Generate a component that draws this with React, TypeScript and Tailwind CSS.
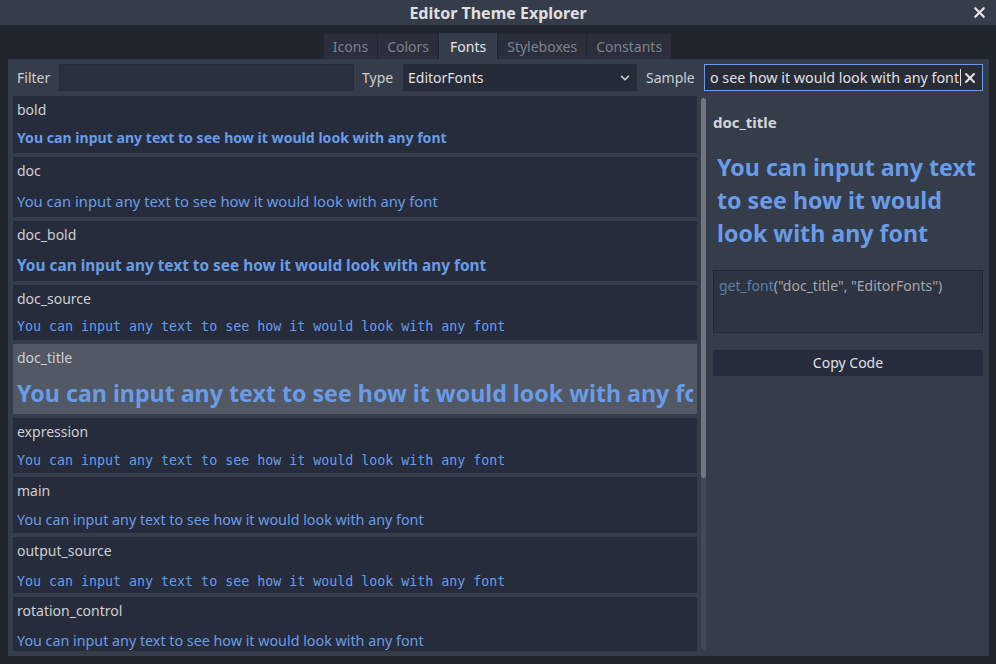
import { ChevronDown, X } from 'lucide-react'

const SAMPLE = 'You can input any text to see how it would look with any font'

const sans = "font-['Noto_Sans',sans-serif]"
const mono = "font-['DejaVu_Sans_Mono',monospace]"

interface FontItem {
  name: string
  cls: string
  sampleH: string
  selected?: boolean
}

const items: FontItem[] = [
  { name: 'bold', cls: `${sans} font-bold text-[14.1px]`, sampleH: 'h-[31px]' },
  { name: 'doc', cls: `${sans} text-[14.8px]`, sampleH: 'h-[34px] pt-[3px]' },
  { name: 'doc_bold', cls: `${sans} font-bold text-[15.4px]`, sampleH: 'h-[34px] pt-[3px]' },
  { name: 'doc_source', cls: `${mono} text-[13.3px]`, sampleH: 'h-[29px] pt-[2px]' },
  { name: 'doc_title', cls: `${sans} font-bold text-[23.2px]`, sampleH: 'h-[44px] pt-[2px]', selected: true },
  { name: 'expression', cls: `${mono} text-[13.3px]`, sampleH: 'h-[29px] pt-[4px]' },
  { name: 'main', cls: `${sans} text-[14.3px]`, sampleH: 'h-[30px] pt-[4px]' },
  { name: 'output_source', cls: `${mono} text-[13.3px]`, sampleH: 'h-[30px] pt-[8px]' },
  { name: 'rotation_control', cls: `${sans} text-[14.3px]`, sampleH: 'h-[28px] pt-[8px]' },
]

const tabs = ['Icons', 'Colors', 'Fonts', 'Styleboxes', 'Constants']

export default function App() {
  return (
    <div className={`w-[996px] h-[664px] bg-[#21252e] text-[#cdcfd2] ${sans} text-[14px] flex flex-col overflow-hidden`}>
      {/* Title bar */}
      <div className="h-[25px] bg-[#363d4a] relative flex items-center justify-center shrink-0">
        <span className="font-bold text-[16px] text-[#e0e0e0]">Editor Theme Explorer</span>
        <X className="absolute right-[8px] top-[4px] w-[17px] h-[17px] text-[#e8e8e8]" strokeWidth={3} />
      </div>

      {/* Tabs */}
      <div className="h-[34px] flex justify-center items-end gap-[1px] pr-[1px] shrink-0">
        {tabs.map(t => (
          <div
            key={t}
            className={
              t === 'Fonts'
                ? 'h-[26px] px-[11px] flex items-center bg-[#363d4a] text-[#e4e5e7]'
                : 'h-[25px] px-[9px] flex items-center bg-[#2a2f3b] text-[#7d828b]'
            }
          >
            {t}
          </div>
        ))}
      </div>

      {/* Panel */}
      <div className="mx-[8px] w-[981px] h-[597px] bg-[#363d4a] flex flex-col px-[5px] pt-[5px]">
        {/* Toolbar */}
        <div className="h-[27px] flex items-center shrink-0">
          <span className="w-[46px] pl-[4px]">Filter</span>
          <div className="w-[295px] h-[27px] bg-[#2a303d] border border-[#262b36]" />
          <span className="ml-[8px] w-[41px]">Type</span>
          <div className="w-[234px] h-[27px] bg-[#262b38] flex items-center justify-between px-[5px] text-[#e0e1e3]">
            <span>EditorFonts</span>
            <ChevronDown className="w-[14px] h-[14px] text-[#c8cacd]" strokeWidth={3} />
          </div>
          <span className="ml-[9px] w-[58px]">Sample</span>
          <div className="w-[279px] h-[27px] bg-[#272c38] border border-[#699ce8] flex items-center pl-[5px] pr-[4px] text-[#e0e1e3] whitespace-nowrap">
            <span className="overflow-hidden text-[14.3px]">o see how it would look with any font</span>
            <span className="w-[1px] h-[17px] bg-[#e0e0e0] ml-[1px]" />
            <span className="flex-1" />
            <X className="w-[16px] h-[16px] text-[#e8e8e8]" strokeWidth={3} />
          </div>
        </div>

        {/* Body */}
        <div className="flex mt-[5px] flex-1 min-h-0">
          <div className="w-[684px] flex flex-col gap-[4px] overflow-hidden">
            {items.map(it => (
              <div
                key={it.name}
                className={`${it.selected ? 'bg-[#525864]' : 'bg-[#262c3b]'} px-[4px] shrink-0`}
              >
                <div className="h-[26px] flex items-center">{it.name}</div>
                <div className={`${it.sampleH} flex items-center whitespace-nowrap overflow-hidden text-[#699ce8] ${it.cls}`}>
                  {SAMPLE}
                </div>
              </div>
            ))}
          </div>

          {/* Scrollbar */}
          <div className="ml-[4px] w-[5px] mt-[2px] mb-[6px] rounded-full bg-[#414858] flex flex-col">
            <div className="h-[380px] rounded-full bg-[#71757e]" />
          </div>

          {/* Preview */}
          <div className="ml-[7px] w-[270px] flex flex-col">
            <div className="mt-[15px] font-bold text-[15px] text-[#d4d6d9]">doc_title</div>
            <div className="mt-[17px] pl-[4px] font-bold text-[23.2px] leading-[33px] text-[#699ce8]">
              {SAMPLE}
            </div>
            <div className="mt-[20px] h-[63px] bg-[#2e3442] border border-[#222731] px-[5px] pt-[4px] text-[#a4a7ac]">
              <span className="text-[#5b7fa8]">get_font</span>("doc_title", "EditorFonts")
            </div>
            <div className="mt-[17px] h-[26px] bg-[#262c3b] flex items-center justify-center text-[#e0e1e3]">
              Copy Code
            </div>
          </div>
        </div>
      </div>
    </div>
  )
}
